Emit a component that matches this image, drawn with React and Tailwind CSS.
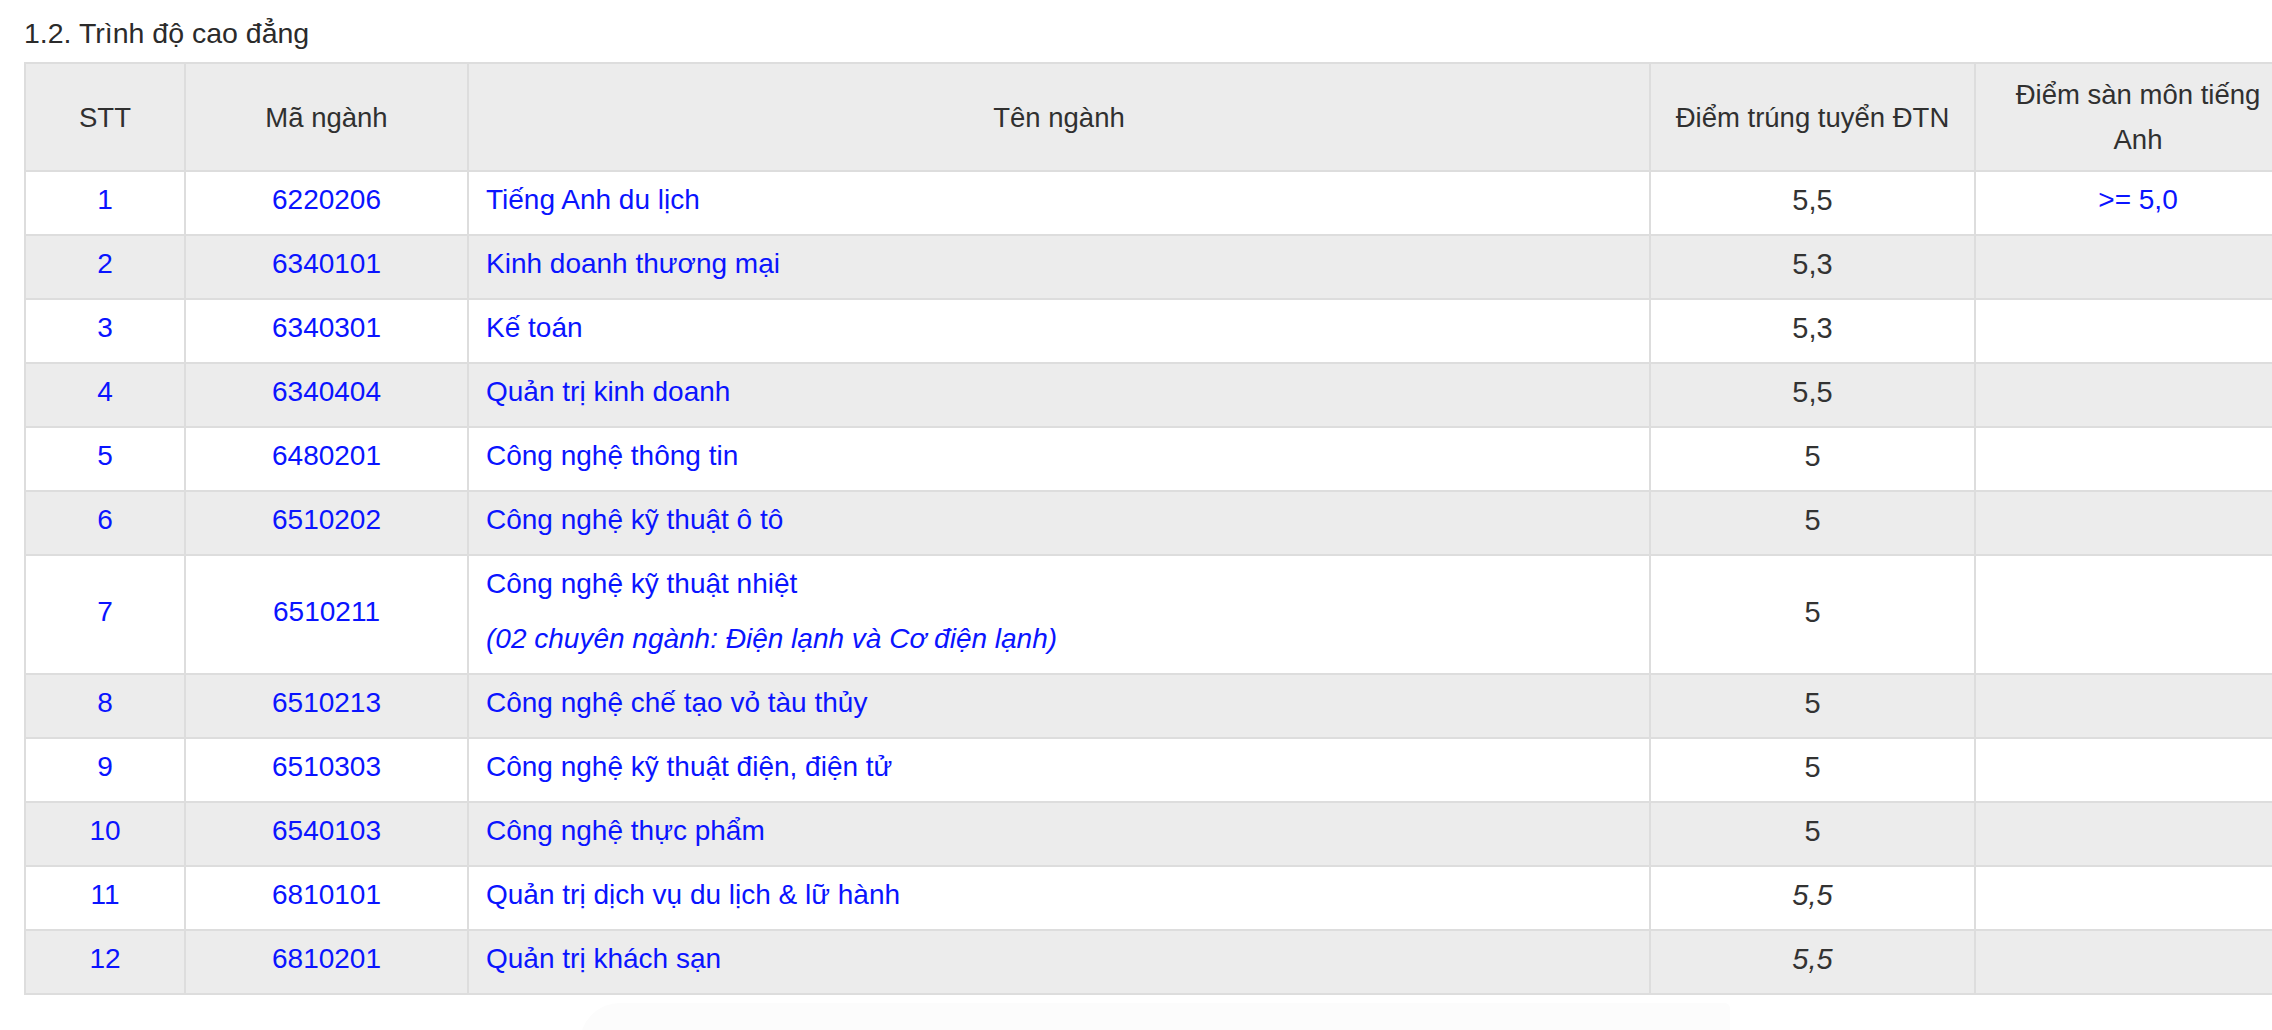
import React from "react";

const rows = [
  { stt: "1", ma: "6220206", ten: "Tiếng Anh du lịch", diem: "5,5", san: ">= 5,0" },
  { stt: "2", ma: "6340101", ten: "Kinh doanh thương mại", diem: "5,3" },
  { stt: "3", ma: "6340301", ten: "Kế toán", diem: "5,3" },
  { stt: "4", ma: "6340404", ten: "Quản trị kinh doanh", diem: "5,5" },
  { stt: "5", ma: "6480201", ten: "Công nghệ thông tin", diem: "5" },
  { stt: "6", ma: "6510202", ten: "Công nghệ kỹ thuật ô tô", diem: "5" },
  {
    stt: "7",
    ma: "6510211",
    ten: "Công nghệ kỹ thuật nhiệt",
    sub: "(02 chuyên ngành: Điện lạnh và Cơ điện lạnh)",
    diem: "5",
  },
  { stt: "8", ma: "6510213", ten: "Công nghệ chế tạo vỏ tàu thủy", diem: "5" },
  { stt: "9", ma: "6510303", ten: "Công nghệ kỹ thuật điện, điện tử", diem: "5" },
  { stt: "10", ma: "6540103", ten: "Công nghệ thực phẩm", diem: "5" },
  { stt: "11", ma: "6810101", ten: "Quản trị dịch vụ du lịch & lữ hành", diem: "5,5", italic: true },
  { stt: "12", ma: "6810201", ten: "Quản trị khách sạn", diem: "5,5", italic: true },
];

export default function App() {
  return (
    <div className="w-[2272px] h-[1030px] overflow-hidden bg-white font-['Liberation_Sans',Arial,sans-serif] text-[#333333]">
      <div className="pl-[24px]">
        <h2 className="pt-[13px] mb-[9px] text-[28.5px] leading-[40px] font-normal text-[#2b2b2b]">
          1.2. Trình độ cao đẳng
        </h2>
        <table className="table-fixed border-collapse w-[2276px] text-[28px]">
          <colgroup>
            <col className="w-[160px]" />
            <col className="w-[283px]" />
            <col className="w-[1182px]" />
            <col className="w-[325px]" />
            <col className="w-[326px]" />
          </colgroup>
          <thead>
            <tr className="bg-[#ececec] text-[#303030] text-[27.5px]">
              <th className="border-2 border-[#dddddd] py-[8px] px-[16px] font-normal leading-[45px] text-center">STT</th>
              <th className="border-2 border-[#dddddd] py-[8px] px-[16px] font-normal leading-[45px] text-center">Mã ngành</th>
              <th className="border-2 border-[#dddddd] py-[8px] px-[16px] font-normal leading-[45px] text-center">Tên ngành</th>
              <th className="border-2 border-[#dddddd] py-[8px] px-[12px] font-normal leading-[45px] text-center">Điểm trúng tuyển ĐTN</th>
              <th className="border-2 border-[#dddddd] py-[8px] px-[12px] font-normal leading-[45px] text-center">
                Điểm sàn môn tiếng
                <br />
                Anh
              </th>
            </tr>
          </thead>
          <tbody>
            {rows.map((r, i) => (
              <tr key={r.stt} className={i % 2 === 1 ? "bg-[#ececec]" : "bg-white"}>
                <td className="border-2 border-[#dddddd] pt-[5px] pb-[11px] px-[12px] leading-[46px] text-center text-[#0a14ff]">{r.stt}</td>
                <td className="border-2 border-[#dddddd] pt-[5px] pb-[11px] px-[12px] leading-[46px] text-center text-[#0a14ff]">{r.ma}</td>
                <td className="border-2 border-[#dddddd] pt-[5px] pb-[11px] px-[17px] leading-[46px] text-left text-[#0a14ff]">
                  <div>{r.ten}</div>
                  {r.sub && <div className="mt-[9px] italic">{r.sub}</div>}
                </td>
                <td
                  className={
                    "border-2 border-[#dddddd] pt-[5px] pb-[11px] px-[12px] leading-[46px] text-center text-[29px] text-[#333333] " +
                    (r.italic ? "italic" : "not-italic")
                  }
                >
                  {r.diem}
                </td>
                <td className="border-2 border-[#dddddd] pt-[5px] pb-[11px] px-[12px] leading-[46px] text-center text-[#0a14ff]">
                  {r.san || ""}
                </td>
              </tr>
            ))}
          </tbody>
        </table>
        <div className="mt-[8px] ml-[556px] w-[1150px] h-[40px] rounded-tl-[300px] rounded-tr-[40px] bg-[#fcfcfc]" />
      </div>
    </div>
  );
}
